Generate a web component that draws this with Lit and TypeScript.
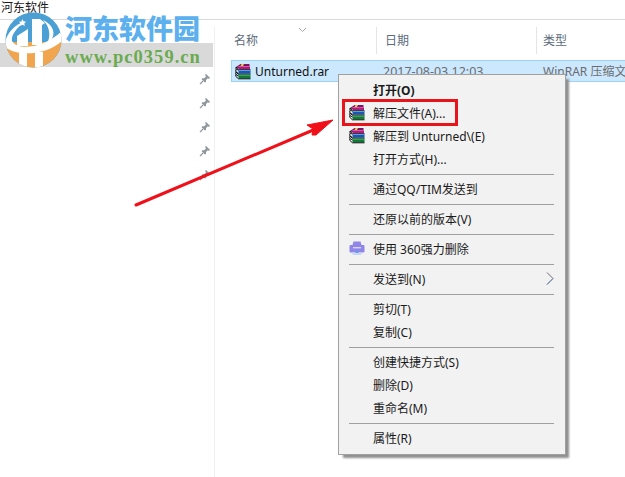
import { LitElement, html, css, svg } from "lit";
import { customElement } from "lit/decorators.js";

const rarIcon = () => html`<svg class="ico" width="16" height="17" viewBox="0 0 16 17">
  <path d="M1 4 L5.5 1 H14.5 V3 L12 5 H3Z" fill="#7a1660"/>
  <path d="M3.5 3 H15 V6.2 H3.5Z" fill="#b01c7c"/>
  <path d="M3.5 3 H15 V4 H3.5Z" fill="#e050ac"/>
  <path d="M6.5 1 H9 L8 3 H5.5Z" fill="#e8cf45"/>
  <path d="M3.5 7 H15.5 V10.6 H3.5Z" fill="#1a55b8"/>
  <path d="M3.5 7 H15.5 V8 H3.5Z" fill="#5cb0f0"/>
  <path d="M3.5 11.5 H15.5 V15.5 H3.5Z" fill="#0e7a38"/>
  <path d="M3.5 11.5 H15.5 V12.6 H3.5Z" fill="#55c070"/>
  <path d="M1 4 L3.5 6.2 M1 4 V6 L3.5 7.2 M.8 6.4 V8.6 L3.5 10.6 M.8 8.8 L3.5 11.4 M.8 9.2 V11.4 L3.5 13 M.8 11.6 V13.4 L3.5 15.8 H15.5" fill="none" stroke="#111" stroke-width="1"/>
  <path d="M3.5 6.6 H15.5 M3.5 11 H15.5" stroke="#1a1a1a" stroke-width=".9"/>
</svg>`;

const pin = html`<svg class="pin" width="12" height="12" viewBox="0 0 12 12">
  <path d="M6.8 .8 L11.2 5 L9.8 5.8 L8.8 5.2 L7 7 L7 9 L6 9.6 L2.6 6.2 L3.2 5.2 L5.2 5.2 L7 3.4 L6.2 2.2Z" fill="#8f969c"/>
  <path d="M4 8 L1 11.2" stroke="#8f969c" stroke-width="1.2"/>
</svg>`;

const logo = svg`<svg class="logo" width="57" height="56" viewBox="0 0 57 56">
  <defs><clipPath id="c"><ellipse cx="28.5" cy="28" rx="28" ry="27.5"/></clipPath></defs>
  <g clip-path="url(#c)">
    <rect width="57" height="56" fill="#4a9fd4"/>
    <path d="M0 30 H57 V56 H0Z" fill="#f0a54e"/>
    <path d="M0 31 C 2 20, 10 13, 20 9 C 11 17, 6 23, 7 29 C 12 38, 36 38, 57 19 L58 28 C 44 42, 14 46, 0 35Z" fill="#fff"/>
    <path d="M12 24 L23 17 V34 H12Z" fill="#fff"/>
    <path d="M27 7 H35 L40 11 L37 13 V33 H27Z" fill="#fff"/>
    <path d="M38 8 C 49 13, 53 24, 42 32 C 46 24, 45 15, 38 8Z" fill="#fff"/>
    <path d="M14 41 H22 V56 H14Z M30 40 H38 V56 H30Z" fill="#fff"/>
    <path d="M17.5 7 l1.1 2.4 2.6.3-1.9 1.8.5 2.6-2.3-1.3-2.3 1.3.5-2.6-1.9-1.8 2.6-.3Z" fill="#fff"/>
  </g>
</svg>`;

type Row =
  | { sep: true }
  | { t: string; icon?: "rar" | "360"; bold?: boolean; arrow?: boolean; box?: boolean };

const rows: Row[] = [
  { t: "打开(O)", bold: true },
  { t: "解压文件(A)...", icon: "rar", box: true },
  { t: "解压到 Unturned\\(E)", icon: "rar" },
  { t: "打开方式(H)..." },
  { sep: true },
  { t: "通过QQ/TIM发送到" },
  { sep: true },
  { t: "还原以前的版本(V)" },
  { sep: true },
  { t: "使用 360强力删除", icon: "360" },
  { sep: true },
  { t: "发送到(N)", arrow: true },
  { sep: true },
  { t: "剪切(T)" },
  { t: "复制(C)" },
  { sep: true },
  { t: "创建快捷方式(S)" },
  { t: "删除(D)" },
  { t: "重命名(M)" },
  { sep: true },
  { t: "属性(R)" },
];

const icon360 = html`<svg class="ico" width="16" height="16" viewBox="0 0 16 16">
  <path d="M4.5 1.5 H11.5 L12.5 5 H14.5 Q15.5 5 15.5 6 V11.5 Q15.5 12.5 14.5 12.5 H1.5 Q.5 12.5 .5 11.5 V6 Q.5 5 1.5 5 H3.5Z" fill="#8f86e8"/>
  <path d="M4 7 H12 V8.4 H4Z" fill="#d8d4f8"/>
  <path d="M3 12.5 H13 L12 15 H4Z" fill="#c9d6f6"/>
  <path d="M6.5 11 H9.5 V13 H6.5Z" fill="#5aa0ea"/>
</svg>`;

@customElement("app-root")
export class AppRoot extends LitElement {
  static styles = css`
    :host {
      display: block;
      position: relative;
      width: 625px;
      height: 477px;
      overflow: hidden;
      background: #fff;
      font-family: "Noto Sans", "Noto Sans CJK SC", sans-serif;
      font-size: 12px;
      color: #1a1a1a;
    }
    .title {
      height: 19px;
      box-sizing: border-box;
      padding: 1px 0 0 1px;
      font-size: 12px;
      line-height: 14px;
    }
    .rule { height: 1px; background: #d9d9d9; }
    .body {
      display: grid;
      grid-template-columns: 215px 1fr;
      height: 457px;
    }
    .side {
      position: relative;
      padding-top: 23px;
    }
    .side::after {
      content: "";
      position: absolute;
      right: 0;
      top: 7px;
      bottom: 0;
      width: 1px;
      background: #f0f0f0;
    }
    .quick {
      height: 24px;
      width: 213px;
      background: #d9d9d9;
    }
    .pins {
      display: flex;
      flex-direction: column;
      align-items: flex-end;
      gap: 12px;
      padding: 6px 4px 0 0;
      width: 215px;
      box-sizing: border-box;
    }
    .pin { display: block; }
    .main { padding: 7px 0 0 16px; }
    .head {
      position: relative;
      display: flex;
      height: 27px;
      font-size: 12px;
      color: #5b6b7b;
      line-height: 28px;
    }
    .col { box-sizing: border-box; padding-left: 3px; }
    .c1 { width: 145px; }
    .c2 { width: 160px; border-left: 1px solid #e5e5e5; padding-left: 8px; }
    .c3 { flex: 1; border-left: 1px solid #e5e5e5; padding-left: 6px; }
    .chev { position: absolute; left: 67px; top: 0; }
    .file {
      display: flex;
      align-items: center;
      height: 22px;
      margin-top: 6px;
      box-sizing: border-box;
      background: #cce8ff;
      border: 1px solid #99d1ff;
      border-right: 0;
      color: #6d6d6d;
      white-space: nowrap;
      overflow: hidden;
    }
    .file .ico { margin-left: 3px; flex: none; }
    .fname { width: 132px; padding-left: 4px; box-sizing: border-box; color: #111; flex: none; }
    .fdate { width: 160px; flex: none; font-size: 12.5px; }
    .ico { display: block; }

    .brand {
      position: absolute;
      left: 5px;
      top: 12px;
      display: flex;
      gap: 3px;
    }
    .logo { display: block; flex: none; }
    .cn {
      font-size: 27px;
      line-height: 32px;
      font-weight: 900;
      color: #5cb0ee;
      font-family: "Noto Sans CJK SC", sans-serif;
      white-space: nowrap;
    }
    .url {
      font-family: "Liberation Serif", serif;
      font-weight: 700;
      font-size: 18.5px;
      line-height: 19px;
      margin-top: 4px;
      color: #6aab50;
      white-space: nowrap;
      letter-spacing: 1.05px;
    }

    .menu {
      position: absolute;
      left: 338px;
      top: 74px;
      width: 228px;
      height: 381px;
      box-sizing: border-box;
      padding: 4px 2px 0 2px;
      background: #f2f2f2;
      border: 1px solid #a0a0a0;
      box-shadow: 4px 4px 2px -1px #8f8f8f;
    }
    .row {
      position: relative;
      display: flex;
      align-items: center;
      height: 23px;
      box-sizing: border-box;
      padding: 0 0 2px 32px;
      font-size: 12px;
      white-space: nowrap;
    }
    .row.b { font-weight: 700; }
    .row .ico { position: absolute; left: 8px; top: 2px; }
    .sep { height: 1px; background: #a0a0a0; margin: 3px 9px 3px 8px; }
    .more { position: absolute; right: 9px; top: 4px; }
    .box {
      position: absolute;
      left: 1px;
      top: -3px;
      width: 110px;
      height: 21px;
      border: 3px solid #e8141a;
      pointer-events: none;
    }
    .arrow { position: absolute; left: 0; top: 0; pointer-events: none; }
  `;

  render() {
    return html`
      <div class="title">河东软件</div>
      <div class="rule"></div>
      <div class="body">
        <div class="side">
          <div class="quick"></div>
          <div class="pins">${[0, 1, 2, 3, 4].map(() => pin)}</div>
        </div>
        <div class="main">
          <div class="head">
            <div class="col c1">名称</div>
            <div class="col c2">日期</div>
            <div class="col c3">类型</div>
            <svg class="chev" width="9" height="6" viewBox="0 0 9 6"><path d="M1 1 L4.5 4.5 L8 1" fill="none" stroke="#a8a8a8"/></svg>
          </div>
          <div class="file">
            ${rarIcon()}
            <div class="fname">Unturned.rar</div>
            <div class="fdate">2017-08-03 12:03</div>
            <div>WinRAR 压缩文</div>
          </div>
        </div>
      </div>

      <div class="brand">
        ${logo}
        <div>
          <div class="cn">河东软件园</div>
          <div class="url">www.pc0359.cn</div>
        </div>
      </div>

      <div class="menu">
        ${rows.map((r) =>
          "sep" in r
            ? html`<div class="sep"></div>`
            : html`<div class="row ${r.bold ? "b" : ""}">
                ${r.icon === "rar" ? rarIcon() : r.icon === "360" ? icon360 : ""}
                <span>${r.t}</span>
                ${r.arrow
                  ? html`<svg class="more" width="8" height="13" viewBox="0 0 8 13"><path d="M1 .5 L7 6.5 L1 12.5" fill="none" stroke="#6a6a6a"/><path d="M7 6.5 L1 12.5" fill="none" stroke="#3f7fd0" stroke-width=".6"/></svg>`
                  : ""}
                ${r.box ? html`<div class="box"></div>` : ""}
              </div>`
        )}
      </div>

      <svg class="arrow" width="625" height="477" viewBox="0 0 625 477">
        <path d="M136 205 L318 128" stroke="#f0101a" stroke-width="3" stroke-linecap="round"/>
        <path d="M333 120 L307 125 L313 129 L312 135 L316 135Z" fill="#f0101a" stroke="#f0101a" stroke-linejoin="round"/>
      </svg>
    `;
  }
}
